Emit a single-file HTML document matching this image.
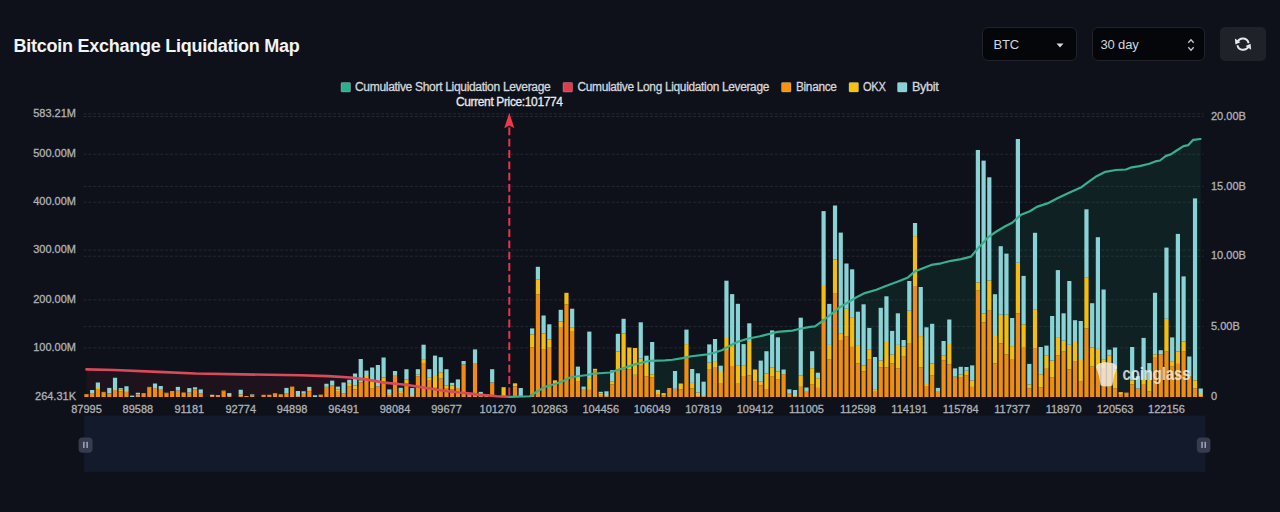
<!DOCTYPE html>
<html><head><meta charset="utf-8">
<style>
html,body{margin:0;padding:0;background:#0e1119;width:1280px;height:512px;overflow:hidden;font-family:"Liberation Sans",sans-serif;}
.title{position:absolute;left:13.5px;top:35.5px;font-size:18px;line-height:20px;font-weight:bold;color:#f2f3f5;white-space:nowrap;letter-spacing:-0.25px}
.sel{position:absolute;top:27px;height:34px;box-sizing:border-box;border:1.5px solid #20232b;border-radius:6px;background:#04060a;color:#d0d4dc;font-size:13px;letter-spacing:-0.15px}
.sel span{position:absolute;left:10.5px;top:8.5px}
.btn{position:absolute;left:1220px;top:27px;width:46px;height:34px;border-radius:5px;background:#1f2229}
svg{position:absolute;left:0;top:0}
</style></head><body>
<div class="title">Bitcoin Exchange Liquidation Map</div>
<div class="sel" style="left:982px;width:95px"><span>BTC</span>
<svg width="8" height="5" style="left:72.8px;top:14.6px"><path d="M0.5,0.5 L7.5,0.5 L4,4.5 Z" fill="#d8dae0"/></svg></div>
<div class="sel" style="left:1092px;width:113px"><span style="left:7.5px">30 day</span>
<svg width="10" height="16" style="left:92.5px;top:9px"><path d="M2.3,5.8 L5,2.8 L7.7,5.8 M2.3,10.2 L5,13.2 L7.7,10.2" fill="none" stroke="#c4c8d0" stroke-width="1.3"/></svg></div>
<div class="btn"><svg width="20" height="20" style="left:13px;top:7px" viewBox="0 0 20 20">
<path d="M15.6,9.2 A5.9,5.9 0 0 0 4.6,7.6" fill="none" stroke="#e6e8ec" stroke-width="1.9"/>
<path d="M1.9,4.6 L7.4,8.3 L2.4,10.6 Z" fill="#e6e8ec"/>
<path d="M4.4,11.2 A5.9,5.9 0 0 0 15.4,12.6" fill="none" stroke="#e6e8ec" stroke-width="1.9"/>
<path d="M18.1,15.8 L12.6,12.1 L17.6,9.8 Z" fill="#e6e8ec"/>
</svg></div>
<svg width="1280" height="512" viewBox="0 0 1280 512" style="font-family:'Liberation Sans',sans-serif">
<g font-size="12" fill="#d4d6db" stroke="#d4d6db" stroke-width="0.3" letter-spacing="-0.32">
<rect x="341" y="82.5" width="9.5" height="9.5" rx="1" fill="#2bb08e"/><text x="355" y="91.3" textLength="195.5" lengthAdjust="spacingAndGlyphs">Cumulative Short Liquidation Leverage</text>
<rect x="563" y="82.5" width="9.5" height="9.5" rx="1" fill="#e5394c"/><text x="577.5" y="91.3" textLength="191.5" lengthAdjust="spacingAndGlyphs">Cumulative Long Liquidation Leverage</text>
<rect x="781.5" y="82.5" width="9.5" height="9.5" rx="1" fill="#f7930f"/><text x="796" y="91.3" textLength="40.5" lengthAdjust="spacingAndGlyphs">Binance</text>
<rect x="849" y="82.5" width="9.5" height="9.5" rx="1" fill="#f7c20a"/><text x="863" y="91.3" textLength="22.5" lengthAdjust="spacingAndGlyphs">OKX</text>
<rect x="897.5" y="82.5" width="9.5" height="9.5" rx="1" fill="#86d3d7"/><text x="912" y="91.3" textLength="26.5" lengthAdjust="spacingAndGlyphs">Bybit</text>
</g>
<g stroke="#242832" stroke-width="1" stroke-dasharray="3,1.8">
<line x1="83.6" y1="113.9" x2="1203.6" y2="113.9"/>
<line x1="83.6" y1="154.2" x2="1203.6" y2="154.2"/>
<line x1="83.6" y1="202.2" x2="1203.6" y2="202.2"/>
<line x1="83.6" y1="250.1" x2="1203.6" y2="250.1"/>
<line x1="83.6" y1="299.9" x2="1203.6" y2="299.9"/>
<line x1="83.6" y1="347.9" x2="1203.6" y2="347.9"/>
<line x1="83.6" y1="116.5" x2="1203.6" y2="116.5"/>
<line x1="83.6" y1="186.4" x2="1203.6" y2="186.4"/>
<line x1="83.6" y1="256.2" x2="1203.6" y2="256.2"/>
<line x1="83.6" y1="326.6" x2="1203.6" y2="326.6"/>
</g>
<path d="M86.5,369.4 L114.25,370 L158,371.9 L195.5,373.5 L243,374.4 L300,375.2 L328,376.1 L350.6,377.5 L365.6,379.4 L384.4,382.6 L403,384.5 L412.4,385.75 L421.75,387.3 L431.1,388.75 L440.5,390.2 L449.9,391.4 L459.2,392.5 L468.6,393.4 L478,394.6 L487.3,395.3 L496.7,396.25 L509.3,396.7 L509.3,397.0 L86.5,397.0 Z" fill="#e5394c" fill-opacity="0.08"/>
<path d="M509.3,396.8 L530,396.25 L537.5,391.25 L545,386.9 L555,384 L562.5,381.25 L570,377.5 L577.5,376.25 L587.5,375 L592.5,373.75 L610,372.5 L617.5,370 L625,367.5 L635,364.4 L642.5,362.5 L650,360.8 L665,360.3 L672.5,359.75 L682.5,358.1 L691.25,356.25 L707.5,354.4 L715,352.5 L722.5,350 L730,345.6 L737.5,341.9 L747.5,338.75 L760,336.25 L770,333.75 L777.5,331.9 L792.5,330.6 L800,328.75 L810,326.9 L815,326.3 L823.3,320.5 L831.6,313.9 L839.9,307.2 L848.2,302.3 L856.5,297.3 L864.8,293.1 L876.4,289.8 L886.4,285.7 L898,281.5 L908,277.4 L914.6,271.6 L922.9,268.2 L931.2,264.9 L941.1,263.3 L951.1,260.8 L961,259.1 L971,256.6 L978.8,247.4 L987.6,237.7 L996.4,231.5 L1005.2,226.3 L1012.2,222.7 L1021,214.8 L1029.8,211.3 L1036.8,206.9 L1047.4,203.4 L1057.9,198.1 L1068.5,192.9 L1080.8,187.6 L1087.8,182.3 L1096.6,176.2 L1105.4,171.8 L1115.9,170 L1125.9,169.5 L1131.7,167.3 L1139.5,166.1 L1149.3,163.7 L1155.2,161.4 L1160,160.5 L1165.9,155.9 L1170.8,154.4 L1176.6,150.5 L1183.5,146.1 L1188.4,145.1 L1193.2,139.8 L1200.5,139 L1200.5,397.0 L509.3,397.0 Z" fill="#2bb08e" fill-opacity="0.1"/>
<g>
<rect x="84.36" y="394.5" width="4.2" height="2.5" fill="#f08c12"/>
<rect x="84.36" y="394" width="4.2" height="0.5" fill="#f5bd12"/>
<rect x="90.07" y="393.75" width="4.2" height="3.25" fill="#f08c12"/>
<rect x="90.07" y="390" width="4.2" height="3.75" fill="#89d2d5"/>
<rect x="95.79" y="389" width="4.2" height="8" fill="#f08c12"/>
<rect x="95.79" y="388" width="4.2" height="1" fill="#f5bd12"/>
<rect x="95.79" y="382.5" width="4.2" height="5.5" fill="#89d2d5"/>
<rect x="101.5" y="392.5" width="4.2" height="4.5" fill="#f08c12"/>
<rect x="101.5" y="391.9" width="4.2" height="0.6" fill="#f5bd12"/>
<rect x="107.21" y="393.5" width="4.2" height="3.5" fill="#f08c12"/>
<rect x="107.21" y="393.1" width="4.2" height="0.4" fill="#f5bd12"/>
<rect x="107.21" y="387.9" width="4.2" height="5.2" fill="#89d2d5"/>
<rect x="112.93" y="390" width="4.2" height="7" fill="#f08c12"/>
<rect x="112.93" y="377.75" width="4.2" height="12.25" fill="#89d2d5"/>
<rect x="118.64" y="391.25" width="4.2" height="5.75" fill="#f08c12"/>
<rect x="118.64" y="389.4" width="4.2" height="1.85" fill="#f5bd12"/>
<rect x="118.64" y="388.1" width="4.2" height="1.3" fill="#89d2d5"/>
<rect x="124.36" y="391.9" width="4.2" height="5.1" fill="#f08c12"/>
<rect x="124.36" y="386.25" width="4.2" height="5.65" fill="#89d2d5"/>
<rect x="130.07" y="395.6" width="4.2" height="1.4" fill="#89d2d5"/>
<rect x="135.79" y="394.4" width="4.2" height="2.6" fill="#f08c12"/>
<rect x="135.79" y="392.75" width="4.2" height="1.65" fill="#89d2d5"/>
<rect x="141.5" y="393.1" width="4.2" height="3.9" fill="#f08c12"/>
<rect x="147.21" y="387.5" width="4.2" height="9.5" fill="#f08c12"/>
<rect x="147.21" y="386.9" width="4.2" height="0.6" fill="#f5bd12"/>
<rect x="152.93" y="388.1" width="4.2" height="8.9" fill="#f08c12"/>
<rect x="152.93" y="383.5" width="4.2" height="4.6" fill="#89d2d5"/>
<rect x="158.64" y="389.75" width="4.2" height="7.25" fill="#f08c12"/>
<rect x="158.64" y="386" width="4.2" height="3.75" fill="#89d2d5"/>
<rect x="164.36" y="393.5" width="4.2" height="3.5" fill="#f08c12"/>
<rect x="164.36" y="392.75" width="4.2" height="0.75" fill="#f5bd12"/>
<rect x="170.07" y="391" width="4.2" height="6" fill="#f08c12"/>
<rect x="175.79" y="390.6" width="4.2" height="6.4" fill="#f08c12"/>
<rect x="175.79" y="386.9" width="4.2" height="3.7" fill="#89d2d5"/>
<rect x="181.5" y="392.5" width="4.2" height="4.5" fill="#f08c12"/>
<rect x="187.21" y="392.5" width="4.2" height="4.5" fill="#f08c12"/>
<rect x="187.21" y="388.1" width="4.2" height="4.4" fill="#89d2d5"/>
<rect x="192.93" y="389.4" width="4.2" height="7.6" fill="#f08c12"/>
<rect x="192.93" y="387.25" width="4.2" height="2.15" fill="#89d2d5"/>
<rect x="198.64" y="393.1" width="4.2" height="3.9" fill="#f08c12"/>
<rect x="198.64" y="389.4" width="4.2" height="3.7" fill="#89d2d5"/>
<rect x="210.07" y="396" width="4.2" height="1" fill="#f08c12"/>
<rect x="210.07" y="394.75" width="4.2" height="1.25" fill="#89d2d5"/>
<rect x="215.79" y="395" width="4.2" height="2" fill="#f08c12"/>
<rect x="221.5" y="391.5" width="4.2" height="5.5" fill="#f08c12"/>
<rect x="221.5" y="390.6" width="4.2" height="0.9" fill="#f5bd12"/>
<rect x="227.21" y="396" width="4.2" height="1" fill="#f08c12"/>
<rect x="227.21" y="393.1" width="4.2" height="2.9" fill="#89d2d5"/>
<rect x="238.64" y="396" width="4.2" height="1" fill="#f08c12"/>
<rect x="238.64" y="394.4" width="4.2" height="1.6" fill="#f5bd12"/>
<rect x="238.64" y="389.75" width="4.2" height="4.65" fill="#89d2d5"/>
<rect x="244.36" y="396" width="4.2" height="1" fill="#f08c12"/>
<rect x="250.07" y="396" width="4.2" height="1" fill="#f08c12"/>
<rect x="250.07" y="395.5" width="4.2" height="0.5" fill="#f5bd12"/>
<rect x="250.07" y="394.4" width="4.2" height="1.1" fill="#89d2d5"/>
<rect x="261.5" y="394.75" width="4.2" height="2.25" fill="#f08c12"/>
<rect x="267.21" y="394.75" width="4.2" height="2.25" fill="#f08c12"/>
<rect x="272.93" y="393.6" width="4.2" height="3.4" fill="#f08c12"/>
<rect x="272.93" y="393.1" width="4.2" height="0.5" fill="#f5bd12"/>
<rect x="278.64" y="395" width="4.2" height="2" fill="#f08c12"/>
<rect x="278.64" y="394.4" width="4.2" height="0.6" fill="#f5bd12"/>
<rect x="284.36" y="393.1" width="4.2" height="3.9" fill="#f08c12"/>
<rect x="284.36" y="387.9" width="4.2" height="5.2" fill="#89d2d5"/>
<rect x="290.07" y="386.6" width="4.2" height="10.4" fill="#f08c12"/>
<rect x="295.79" y="396" width="4.2" height="1" fill="#f08c12"/>
<rect x="295.79" y="391" width="4.2" height="5" fill="#89d2d5"/>
<rect x="301.5" y="393.75" width="4.2" height="3.25" fill="#f08c12"/>
<rect x="301.5" y="391.25" width="4.2" height="2.5" fill="#89d2d5"/>
<rect x="307.21" y="391.25" width="4.2" height="5.75" fill="#f08c12"/>
<rect x="307.21" y="390" width="4.2" height="1.25" fill="#f5bd12"/>
<rect x="307.21" y="386.9" width="4.2" height="3.1" fill="#89d2d5"/>
<rect x="312.93" y="395.25" width="4.2" height="1.75" fill="#89d2d5"/>
<rect x="318.64" y="394.6" width="4.2" height="2.4" fill="#f08c12"/>
<rect x="324.36" y="386.9" width="4.2" height="10.1" fill="#f08c12"/>
<rect x="324.36" y="383.75" width="4.2" height="3.15" fill="#89d2d5"/>
<rect x="330.07" y="385.6" width="4.2" height="11.4" fill="#f08c12"/>
<rect x="330.07" y="380.6" width="4.2" height="5" fill="#89d2d5"/>
<rect x="335.79" y="391" width="4.2" height="6" fill="#f08c12"/>
<rect x="335.79" y="389.4" width="4.2" height="1.6" fill="#f5bd12"/>
<rect x="335.79" y="386.6" width="4.2" height="2.8" fill="#89d2d5"/>
<rect x="341.5" y="393.1" width="4.2" height="3.9" fill="#f08c12"/>
<rect x="341.5" y="382.5" width="4.2" height="10.6" fill="#89d2d5"/>
<rect x="347.21" y="386.25" width="4.2" height="10.75" fill="#f08c12"/>
<rect x="347.21" y="383.1" width="4.2" height="3.15" fill="#f5bd12"/>
<rect x="347.21" y="379.75" width="4.2" height="3.35" fill="#89d2d5"/>
<rect x="352.93" y="389.4" width="4.2" height="7.6" fill="#f08c12"/>
<rect x="352.93" y="385.6" width="4.2" height="3.8" fill="#f5bd12"/>
<rect x="352.93" y="373.5" width="4.2" height="12.1" fill="#89d2d5"/>
<rect x="358.64" y="382.5" width="4.2" height="14.5" fill="#f08c12"/>
<rect x="358.64" y="380.6" width="4.2" height="1.9" fill="#f5bd12"/>
<rect x="358.64" y="359" width="4.2" height="21.6" fill="#89d2d5"/>
<rect x="364.36" y="378.1" width="4.2" height="18.9" fill="#f08c12"/>
<rect x="364.36" y="375" width="4.2" height="3.1" fill="#f5bd12"/>
<rect x="364.36" y="370.6" width="4.2" height="4.4" fill="#89d2d5"/>
<rect x="370.07" y="388.1" width="4.2" height="8.9" fill="#f08c12"/>
<rect x="370.07" y="381.9" width="4.2" height="6.2" fill="#f5bd12"/>
<rect x="370.07" y="367.5" width="4.2" height="14.4" fill="#89d2d5"/>
<rect x="375.79" y="386.25" width="4.2" height="10.75" fill="#f08c12"/>
<rect x="375.79" y="365" width="4.2" height="21.25" fill="#89d2d5"/>
<rect x="381.5" y="381.9" width="4.2" height="15.1" fill="#f08c12"/>
<rect x="381.5" y="377.5" width="4.2" height="4.4" fill="#f5bd12"/>
<rect x="381.5" y="357.5" width="4.2" height="20" fill="#89d2d5"/>
<rect x="387.21" y="395" width="4.2" height="2" fill="#f08c12"/>
<rect x="387.21" y="393.1" width="4.2" height="1.9" fill="#f5bd12"/>
<rect x="387.21" y="389.4" width="4.2" height="3.7" fill="#89d2d5"/>
<rect x="392.93" y="375" width="4.2" height="22" fill="#f08c12"/>
<rect x="392.93" y="371" width="4.2" height="4" fill="#89d2d5"/>
<rect x="398.64" y="393.75" width="4.2" height="3.25" fill="#f08c12"/>
<rect x="398.64" y="391.9" width="4.2" height="1.85" fill="#f5bd12"/>
<rect x="398.64" y="387.75" width="4.2" height="4.15" fill="#89d2d5"/>
<rect x="404.36" y="383.3" width="4.2" height="13.7" fill="#f08c12"/>
<rect x="404.36" y="379.4" width="4.2" height="3.9" fill="#f5bd12"/>
<rect x="404.36" y="369.2" width="4.2" height="10.2" fill="#89d2d5"/>
<rect x="410.07" y="396" width="4.2" height="1" fill="#f08c12"/>
<rect x="410.07" y="388" width="4.2" height="8" fill="#89d2d5"/>
<rect x="415.79" y="376.2" width="4.2" height="20.8" fill="#f08c12"/>
<rect x="415.79" y="374.7" width="4.2" height="1.5" fill="#f5bd12"/>
<rect x="415.79" y="369.2" width="4.2" height="5.5" fill="#89d2d5"/>
<rect x="421.5" y="363" width="4.2" height="34" fill="#f08c12"/>
<rect x="421.5" y="359.8" width="4.2" height="3.2" fill="#f5bd12"/>
<rect x="421.5" y="344.7" width="4.2" height="15.1" fill="#89d2d5"/>
<rect x="427.21" y="380" width="4.2" height="17" fill="#f08c12"/>
<rect x="427.21" y="377.8" width="4.2" height="2.2" fill="#f5bd12"/>
<rect x="427.21" y="369.2" width="4.2" height="8.6" fill="#89d2d5"/>
<rect x="432.93" y="387" width="4.2" height="10" fill="#f08c12"/>
<rect x="432.93" y="375" width="4.2" height="12" fill="#f5bd12"/>
<rect x="432.93" y="355.6" width="4.2" height="19.4" fill="#89d2d5"/>
<rect x="438.64" y="378.6" width="4.2" height="18.4" fill="#f08c12"/>
<rect x="438.64" y="372.3" width="4.2" height="6.3" fill="#f5bd12"/>
<rect x="438.64" y="357.2" width="4.2" height="15.1" fill="#89d2d5"/>
<rect x="444.36" y="388.75" width="4.2" height="8.25" fill="#f08c12"/>
<rect x="444.36" y="385.6" width="4.2" height="3.15" fill="#f5bd12"/>
<rect x="444.36" y="369.2" width="4.2" height="16.4" fill="#89d2d5"/>
<rect x="450.07" y="389.5" width="4.2" height="7.5" fill="#f08c12"/>
<rect x="450.07" y="385.6" width="4.2" height="3.9" fill="#f5bd12"/>
<rect x="450.07" y="382.8" width="4.2" height="2.8" fill="#89d2d5"/>
<rect x="455.79" y="388" width="4.2" height="9" fill="#f08c12"/>
<rect x="455.79" y="379.4" width="4.2" height="8.6" fill="#89d2d5"/>
<rect x="461.5" y="364.5" width="4.2" height="32.5" fill="#f08c12"/>
<rect x="461.5" y="361" width="4.2" height="3.5" fill="#89d2d5"/>
<rect x="467.21" y="395" width="4.2" height="2" fill="#f08c12"/>
<rect x="467.21" y="394.2" width="4.2" height="0.8" fill="#f5bd12"/>
<rect x="472.93" y="363" width="4.2" height="34" fill="#f08c12"/>
<rect x="472.93" y="349.4" width="4.2" height="13.6" fill="#89d2d5"/>
<rect x="478.64" y="396" width="4.2" height="1" fill="#f08c12"/>
<rect x="478.64" y="391.9" width="4.2" height="4.1" fill="#89d2d5"/>
<rect x="484.36" y="396" width="4.2" height="1" fill="#f08c12"/>
<rect x="484.36" y="395" width="4.2" height="1" fill="#f5bd12"/>
<rect x="484.36" y="394" width="4.2" height="1" fill="#89d2d5"/>
<rect x="490.07" y="382.5" width="4.2" height="14.5" fill="#f08c12"/>
<rect x="490.07" y="369.2" width="4.2" height="13.3" fill="#89d2d5"/>
<rect x="501.5" y="396" width="4.2" height="1" fill="#f08c12"/>
<rect x="501.5" y="387.2" width="4.2" height="8.8" fill="#f5bd12"/>
<rect x="512.93" y="386.4" width="4.2" height="10.6" fill="#f08c12"/>
<rect x="512.93" y="383.3" width="4.2" height="3.1" fill="#f5bd12"/>
<rect x="518.64" y="396" width="4.2" height="1" fill="#f08c12"/>
<rect x="518.64" y="388" width="4.2" height="8" fill="#89d2d5"/>
<rect x="530.07" y="347.5" width="4.2" height="49.5" fill="#f08c12"/>
<rect x="530.07" y="334.4" width="4.2" height="13.1" fill="#f5bd12"/>
<rect x="530.07" y="328.4" width="4.2" height="6" fill="#89d2d5"/>
<rect x="535.79" y="294.2" width="4.2" height="102.8" fill="#f08c12"/>
<rect x="535.79" y="279.7" width="4.2" height="14.5" fill="#f5bd12"/>
<rect x="535.79" y="266.8" width="4.2" height="12.9" fill="#89d2d5"/>
<rect x="541.5" y="349.7" width="4.2" height="47.3" fill="#f08c12"/>
<rect x="541.5" y="333.3" width="4.2" height="16.4" fill="#f5bd12"/>
<rect x="541.5" y="315.5" width="4.2" height="17.8" fill="#89d2d5"/>
<rect x="547.21" y="347" width="4.2" height="50" fill="#f08c12"/>
<rect x="547.21" y="339.3" width="4.2" height="7.7" fill="#f5bd12"/>
<rect x="547.21" y="324.3" width="4.2" height="15" fill="#89d2d5"/>
<rect x="552.93" y="383.6" width="4.2" height="13.4" fill="#f08c12"/>
<rect x="552.93" y="380.3" width="4.2" height="3.3" fill="#f5bd12"/>
<rect x="558.64" y="327.8" width="4.2" height="69.2" fill="#f08c12"/>
<rect x="558.64" y="321.5" width="4.2" height="6.3" fill="#f5bd12"/>
<rect x="558.64" y="309.8" width="4.2" height="11.7" fill="#89d2d5"/>
<rect x="564.36" y="304.3" width="4.2" height="92.7" fill="#f08c12"/>
<rect x="564.36" y="292.8" width="4.2" height="11.5" fill="#f5bd12"/>
<rect x="570.07" y="331" width="4.2" height="66" fill="#f08c12"/>
<rect x="570.07" y="327.8" width="4.2" height="3.2" fill="#f5bd12"/>
<rect x="570.07" y="308.7" width="4.2" height="19.1" fill="#89d2d5"/>
<rect x="575.79" y="381.7" width="4.2" height="15.3" fill="#f08c12"/>
<rect x="575.79" y="377" width="4.2" height="4.7" fill="#f5bd12"/>
<rect x="575.79" y="366.6" width="4.2" height="10.4" fill="#89d2d5"/>
<rect x="581.5" y="389" width="4.2" height="8" fill="#f08c12"/>
<rect x="581.5" y="386.6" width="4.2" height="2.4" fill="#89d2d5"/>
<rect x="587.21" y="389.9" width="4.2" height="7.1" fill="#f08c12"/>
<rect x="587.21" y="378.1" width="4.2" height="11.8" fill="#f5bd12"/>
<rect x="587.21" y="331.6" width="4.2" height="46.5" fill="#89d2d5"/>
<rect x="592.93" y="370.7" width="4.2" height="26.3" fill="#f08c12"/>
<rect x="592.93" y="368.8" width="4.2" height="1.9" fill="#f5bd12"/>
<rect x="598.64" y="395" width="4.2" height="2" fill="#f08c12"/>
<rect x="598.64" y="393.5" width="4.2" height="1.5" fill="#f5bd12"/>
<rect x="598.64" y="391.8" width="4.2" height="1.7" fill="#89d2d5"/>
<rect x="604.36" y="396" width="4.2" height="1" fill="#f08c12"/>
<rect x="604.36" y="391.3" width="4.2" height="4.7" fill="#89d2d5"/>
<rect x="610.07" y="384.4" width="4.2" height="12.6" fill="#f08c12"/>
<rect x="610.07" y="381.7" width="4.2" height="2.7" fill="#f5bd12"/>
<rect x="610.07" y="370.2" width="4.2" height="11.5" fill="#89d2d5"/>
<rect x="615.79" y="370.7" width="4.2" height="26.3" fill="#f08c12"/>
<rect x="615.79" y="351.6" width="4.2" height="19.1" fill="#f5bd12"/>
<rect x="615.79" y="333.8" width="4.2" height="17.8" fill="#89d2d5"/>
<rect x="621.5" y="369.4" width="4.2" height="27.6" fill="#f08c12"/>
<rect x="621.5" y="333.3" width="4.2" height="36.1" fill="#f5bd12"/>
<rect x="621.5" y="318.8" width="4.2" height="14.5" fill="#89d2d5"/>
<rect x="627.21" y="369.5" width="4.2" height="27.5" fill="#f08c12"/>
<rect x="627.21" y="347.5" width="4.2" height="22" fill="#f5bd12"/>
<rect x="632.93" y="374.8" width="4.2" height="22.2" fill="#f08c12"/>
<rect x="632.93" y="348" width="4.2" height="26.8" fill="#f5bd12"/>
<rect x="638.64" y="365" width="4.2" height="32" fill="#f08c12"/>
<rect x="638.64" y="358.6" width="4.2" height="6.4" fill="#f5bd12"/>
<rect x="638.64" y="322.3" width="4.2" height="36.3" fill="#89d2d5"/>
<rect x="644.36" y="376.2" width="4.2" height="20.8" fill="#f08c12"/>
<rect x="644.36" y="363" width="4.2" height="13.2" fill="#f5bd12"/>
<rect x="644.36" y="355.7" width="4.2" height="7.3" fill="#89d2d5"/>
<rect x="650.07" y="377.6" width="4.2" height="19.4" fill="#f08c12"/>
<rect x="650.07" y="374.3" width="4.2" height="3.3" fill="#f5bd12"/>
<rect x="650.07" y="342" width="4.2" height="32.3" fill="#89d2d5"/>
<rect x="655.79" y="394" width="4.2" height="3" fill="#f08c12"/>
<rect x="655.79" y="392" width="4.2" height="2" fill="#f5bd12"/>
<rect x="655.79" y="389.9" width="4.2" height="2.1" fill="#89d2d5"/>
<rect x="661.5" y="395.5" width="4.2" height="1.5" fill="#f08c12"/>
<rect x="661.5" y="393.1" width="4.2" height="2.4" fill="#f5bd12"/>
<rect x="667.21" y="388" width="4.2" height="9" fill="#f08c12"/>
<rect x="672.93" y="388.8" width="4.2" height="8.2" fill="#f08c12"/>
<rect x="672.93" y="371" width="4.2" height="17.8" fill="#89d2d5"/>
<rect x="678.64" y="389.3" width="4.2" height="7.7" fill="#f08c12"/>
<rect x="678.64" y="383.5" width="4.2" height="5.8" fill="#f5bd12"/>
<rect x="684.36" y="357.6" width="4.2" height="39.4" fill="#f08c12"/>
<rect x="684.36" y="344.1" width="4.2" height="13.5" fill="#f5bd12"/>
<rect x="684.36" y="329.6" width="4.2" height="14.5" fill="#89d2d5"/>
<rect x="690.07" y="388.5" width="4.2" height="8.5" fill="#f08c12"/>
<rect x="690.07" y="382.9" width="4.2" height="5.6" fill="#f5bd12"/>
<rect x="690.07" y="369" width="4.2" height="13.9" fill="#89d2d5"/>
<rect x="695.79" y="396" width="4.2" height="1" fill="#f08c12"/>
<rect x="695.79" y="392.6" width="4.2" height="3.4" fill="#f5bd12"/>
<rect x="695.79" y="373.3" width="4.2" height="19.3" fill="#89d2d5"/>
<rect x="701.5" y="396" width="4.2" height="1" fill="#f08c12"/>
<rect x="701.5" y="381.7" width="4.2" height="14.3" fill="#89d2d5"/>
<rect x="707.21" y="369" width="4.2" height="28" fill="#f08c12"/>
<rect x="707.21" y="362.6" width="4.2" height="6.4" fill="#f5bd12"/>
<rect x="707.21" y="344.4" width="4.2" height="18.2" fill="#89d2d5"/>
<rect x="712.93" y="367" width="4.2" height="30" fill="#f08c12"/>
<rect x="712.93" y="361.9" width="4.2" height="5.1" fill="#f5bd12"/>
<rect x="712.93" y="339" width="4.2" height="22.9" fill="#89d2d5"/>
<rect x="718.64" y="383" width="4.2" height="14" fill="#f08c12"/>
<rect x="718.64" y="372" width="4.2" height="11" fill="#f5bd12"/>
<rect x="718.64" y="365.7" width="4.2" height="6.3" fill="#89d2d5"/>
<rect x="724.36" y="350" width="4.2" height="47" fill="#f08c12"/>
<rect x="724.36" y="338" width="4.2" height="12" fill="#f5bd12"/>
<rect x="724.36" y="280.7" width="4.2" height="57.3" fill="#89d2d5"/>
<rect x="730.07" y="366" width="4.2" height="31" fill="#f08c12"/>
<rect x="730.07" y="346.1" width="4.2" height="19.9" fill="#f5bd12"/>
<rect x="730.07" y="294.1" width="4.2" height="52" fill="#89d2d5"/>
<rect x="735.79" y="383" width="4.2" height="14" fill="#f08c12"/>
<rect x="735.79" y="365.2" width="4.2" height="17.8" fill="#f5bd12"/>
<rect x="735.79" y="303.8" width="4.2" height="61.4" fill="#89d2d5"/>
<rect x="741.5" y="376" width="4.2" height="21" fill="#f08c12"/>
<rect x="741.5" y="365.2" width="4.2" height="10.8" fill="#f5bd12"/>
<rect x="741.5" y="344.1" width="4.2" height="21.1" fill="#89d2d5"/>
<rect x="747.21" y="375.3" width="4.2" height="21.7" fill="#f08c12"/>
<rect x="747.21" y="341.1" width="4.2" height="34.2" fill="#f5bd12"/>
<rect x="747.21" y="323.3" width="4.2" height="17.8" fill="#89d2d5"/>
<rect x="752.93" y="381.7" width="4.2" height="15.3" fill="#f08c12"/>
<rect x="752.93" y="369.5" width="4.2" height="12.2" fill="#f5bd12"/>
<rect x="758.64" y="385.5" width="4.2" height="11.5" fill="#f08c12"/>
<rect x="758.64" y="381.7" width="4.2" height="3.8" fill="#f5bd12"/>
<rect x="758.64" y="360.6" width="4.2" height="21.1" fill="#89d2d5"/>
<rect x="764.36" y="389" width="4.2" height="8" fill="#f08c12"/>
<rect x="764.36" y="373.6" width="4.2" height="15.4" fill="#f5bd12"/>
<rect x="764.36" y="351.2" width="4.2" height="22.4" fill="#89d2d5"/>
<rect x="770.07" y="376.1" width="4.2" height="20.9" fill="#f08c12"/>
<rect x="770.07" y="367.7" width="4.2" height="8.4" fill="#f5bd12"/>
<rect x="770.07" y="330.4" width="4.2" height="37.3" fill="#89d2d5"/>
<rect x="775.79" y="379.1" width="4.2" height="17.9" fill="#f08c12"/>
<rect x="775.79" y="371.5" width="4.2" height="7.6" fill="#f5bd12"/>
<rect x="775.79" y="337.3" width="4.2" height="34.2" fill="#89d2d5"/>
<rect x="781.5" y="374.1" width="4.2" height="22.9" fill="#f08c12"/>
<rect x="781.5" y="369.5" width="4.2" height="4.6" fill="#89d2d5"/>
<rect x="787.21" y="393.1" width="4.2" height="3.9" fill="#f08c12"/>
<rect x="787.21" y="389.3" width="4.2" height="3.8" fill="#89d2d5"/>
<rect x="792.93" y="396" width="4.2" height="1" fill="#f08c12"/>
<rect x="792.93" y="390" width="4.2" height="6" fill="#89d2d5"/>
<rect x="798.64" y="386.8" width="4.2" height="10.2" fill="#f08c12"/>
<rect x="798.64" y="375.3" width="4.2" height="11.5" fill="#f5bd12"/>
<rect x="798.64" y="317.7" width="4.2" height="57.6" fill="#89d2d5"/>
<rect x="804.36" y="391.8" width="4.2" height="5.2" fill="#f08c12"/>
<rect x="804.36" y="387.5" width="4.2" height="4.3" fill="#89d2d5"/>
<rect x="810.07" y="384.2" width="4.2" height="12.8" fill="#f08c12"/>
<rect x="810.07" y="368.2" width="4.2" height="16" fill="#f5bd12"/>
<rect x="810.07" y="351.2" width="4.2" height="17" fill="#89d2d5"/>
<rect x="815.79" y="387.9" width="4.2" height="9.1" fill="#f08c12"/>
<rect x="815.79" y="378.2" width="4.2" height="9.7" fill="#f5bd12"/>
<rect x="815.79" y="372.7" width="4.2" height="5.5" fill="#89d2d5"/>
<rect x="821.5" y="319.5" width="4.2" height="77.5" fill="#f08c12"/>
<rect x="821.5" y="285" width="4.2" height="34.5" fill="#f5bd12"/>
<rect x="821.5" y="211.1" width="4.2" height="73.9" fill="#89d2d5"/>
<rect x="827.21" y="359.6" width="4.2" height="37.4" fill="#f08c12"/>
<rect x="827.21" y="344.9" width="4.2" height="14.7" fill="#f5bd12"/>
<rect x="827.21" y="303.9" width="4.2" height="41" fill="#89d2d5"/>
<rect x="832.93" y="293.75" width="4.2" height="103.25" fill="#f08c12"/>
<rect x="832.93" y="259.6" width="4.2" height="34.15" fill="#f5bd12"/>
<rect x="832.93" y="205.5" width="4.2" height="54.1" fill="#89d2d5"/>
<rect x="838.64" y="340" width="4.2" height="57" fill="#f08c12"/>
<rect x="838.64" y="333.2" width="4.2" height="6.8" fill="#f5bd12"/>
<rect x="838.64" y="232.6" width="4.2" height="100.6" fill="#89d2d5"/>
<rect x="844.36" y="336.1" width="4.2" height="60.9" fill="#f08c12"/>
<rect x="844.36" y="308.8" width="4.2" height="27.3" fill="#f5bd12"/>
<rect x="844.36" y="263.5" width="4.2" height="45.3" fill="#89d2d5"/>
<rect x="850.07" y="346.9" width="4.2" height="50.1" fill="#f08c12"/>
<rect x="850.07" y="317.2" width="4.2" height="29.7" fill="#f5bd12"/>
<rect x="850.07" y="269.3" width="4.2" height="47.9" fill="#89d2d5"/>
<rect x="855.79" y="363.5" width="4.2" height="33.5" fill="#f08c12"/>
<rect x="855.79" y="345.9" width="4.2" height="17.6" fill="#f5bd12"/>
<rect x="855.79" y="311.7" width="4.2" height="34.2" fill="#89d2d5"/>
<rect x="861.5" y="371.3" width="4.2" height="25.7" fill="#f08c12"/>
<rect x="861.5" y="365.4" width="4.2" height="5.9" fill="#f5bd12"/>
<rect x="861.5" y="304.3" width="4.2" height="61.1" fill="#89d2d5"/>
<rect x="867.21" y="359.6" width="4.2" height="37.4" fill="#f08c12"/>
<rect x="867.21" y="349.8" width="4.2" height="9.8" fill="#f5bd12"/>
<rect x="867.21" y="327.9" width="4.2" height="21.9" fill="#89d2d5"/>
<rect x="872.93" y="391.8" width="4.2" height="5.2" fill="#f08c12"/>
<rect x="872.93" y="389.8" width="4.2" height="2" fill="#f5bd12"/>
<rect x="872.93" y="357" width="4.2" height="32.8" fill="#89d2d5"/>
<rect x="878.64" y="367.4" width="4.2" height="29.6" fill="#f08c12"/>
<rect x="878.64" y="360.5" width="4.2" height="6.9" fill="#f5bd12"/>
<rect x="878.64" y="307.8" width="4.2" height="52.7" fill="#89d2d5"/>
<rect x="884.36" y="367.4" width="4.2" height="29.6" fill="#f08c12"/>
<rect x="884.36" y="342" width="4.2" height="25.4" fill="#f5bd12"/>
<rect x="884.36" y="296.3" width="4.2" height="45.7" fill="#89d2d5"/>
<rect x="890.07" y="363.5" width="4.2" height="33.5" fill="#f08c12"/>
<rect x="890.07" y="354.7" width="4.2" height="8.8" fill="#f5bd12"/>
<rect x="890.07" y="330.9" width="4.2" height="23.8" fill="#89d2d5"/>
<rect x="895.79" y="368.4" width="4.2" height="28.6" fill="#f08c12"/>
<rect x="895.79" y="344.9" width="4.2" height="23.5" fill="#f5bd12"/>
<rect x="895.79" y="313.3" width="4.2" height="31.6" fill="#89d2d5"/>
<rect x="901.5" y="356.6" width="4.2" height="40.4" fill="#f08c12"/>
<rect x="901.5" y="346.5" width="4.2" height="10.1" fill="#f5bd12"/>
<rect x="901.5" y="340" width="4.2" height="6.5" fill="#89d2d5"/>
<rect x="907.21" y="343" width="4.2" height="54" fill="#f08c12"/>
<rect x="907.21" y="310.7" width="4.2" height="32.3" fill="#f5bd12"/>
<rect x="907.21" y="281" width="4.2" height="29.7" fill="#89d2d5"/>
<rect x="912.93" y="286" width="4.2" height="111" fill="#f08c12"/>
<rect x="912.93" y="236.1" width="4.2" height="49.9" fill="#f5bd12"/>
<rect x="912.93" y="223" width="4.2" height="13.1" fill="#89d2d5"/>
<rect x="918.64" y="367.4" width="4.2" height="29.6" fill="#f08c12"/>
<rect x="918.64" y="336.1" width="4.2" height="31.3" fill="#f5bd12"/>
<rect x="918.64" y="287" width="4.2" height="49.1" fill="#89d2d5"/>
<rect x="924.36" y="386" width="4.2" height="11" fill="#f08c12"/>
<rect x="924.36" y="383" width="4.2" height="3" fill="#f5bd12"/>
<rect x="924.36" y="327.3" width="4.2" height="55.7" fill="#89d2d5"/>
<rect x="930.07" y="375.2" width="4.2" height="21.8" fill="#f08c12"/>
<rect x="930.07" y="363.5" width="4.2" height="11.7" fill="#f5bd12"/>
<rect x="930.07" y="323.8" width="4.2" height="39.7" fill="#89d2d5"/>
<rect x="935.79" y="391.8" width="4.2" height="5.2" fill="#f08c12"/>
<rect x="935.79" y="387.9" width="4.2" height="3.9" fill="#89d2d5"/>
<rect x="941.5" y="360.2" width="4.2" height="36.8" fill="#f08c12"/>
<rect x="941.5" y="355.7" width="4.2" height="4.5" fill="#f5bd12"/>
<rect x="941.5" y="341" width="4.2" height="14.7" fill="#89d2d5"/>
<rect x="947.21" y="364.5" width="4.2" height="32.5" fill="#f08c12"/>
<rect x="947.21" y="344" width="4.2" height="20.5" fill="#f5bd12"/>
<rect x="947.21" y="319.5" width="4.2" height="24.5" fill="#89d2d5"/>
<rect x="952.93" y="377.7" width="4.2" height="19.3" fill="#f08c12"/>
<rect x="952.93" y="376.6" width="4.2" height="1.1" fill="#f5bd12"/>
<rect x="952.93" y="368.4" width="4.2" height="8.2" fill="#89d2d5"/>
<rect x="958.64" y="377.7" width="4.2" height="19.3" fill="#f08c12"/>
<rect x="958.64" y="374.6" width="4.2" height="3.1" fill="#f5bd12"/>
<rect x="958.64" y="366.8" width="4.2" height="7.8" fill="#89d2d5"/>
<rect x="964.36" y="375.2" width="4.2" height="21.8" fill="#f08c12"/>
<rect x="964.36" y="370.7" width="4.2" height="4.5" fill="#f5bd12"/>
<rect x="964.36" y="367" width="4.2" height="3.7" fill="#89d2d5"/>
<rect x="970.07" y="386.9" width="4.2" height="10.1" fill="#f08c12"/>
<rect x="970.07" y="380.5" width="4.2" height="6.4" fill="#f5bd12"/>
<rect x="970.07" y="365.4" width="4.2" height="15.1" fill="#89d2d5"/>
<rect x="975.79" y="290.6" width="4.2" height="106.4" fill="#f08c12"/>
<rect x="975.79" y="282.4" width="4.2" height="8.2" fill="#f5bd12"/>
<rect x="975.79" y="150" width="4.2" height="132.4" fill="#89d2d5"/>
<rect x="981.5" y="322.3" width="4.2" height="74.7" fill="#f08c12"/>
<rect x="981.5" y="313.3" width="4.2" height="9" fill="#f5bd12"/>
<rect x="981.5" y="160.6" width="4.2" height="152.7" fill="#89d2d5"/>
<rect x="987.21" y="310.6" width="4.2" height="86.4" fill="#f08c12"/>
<rect x="987.21" y="280.5" width="4.2" height="30.1" fill="#f5bd12"/>
<rect x="987.21" y="177.3" width="4.2" height="103.2" fill="#89d2d5"/>
<rect x="992.93" y="363.4" width="4.2" height="33.6" fill="#f08c12"/>
<rect x="992.93" y="336" width="4.2" height="27.4" fill="#f5bd12"/>
<rect x="992.93" y="294.2" width="4.2" height="41.8" fill="#89d2d5"/>
<rect x="998.64" y="343.4" width="4.2" height="53.6" fill="#f08c12"/>
<rect x="998.64" y="314.7" width="4.2" height="28.7" fill="#f5bd12"/>
<rect x="998.64" y="246.2" width="4.2" height="68.5" fill="#89d2d5"/>
<rect x="1004.36" y="354.3" width="4.2" height="42.7" fill="#f08c12"/>
<rect x="1004.36" y="314.7" width="4.2" height="39.6" fill="#f5bd12"/>
<rect x="1004.36" y="253.6" width="4.2" height="61.1" fill="#89d2d5"/>
<rect x="1010.07" y="359" width="4.2" height="38" fill="#f08c12"/>
<rect x="1010.07" y="346.1" width="4.2" height="12.9" fill="#f5bd12"/>
<rect x="1010.07" y="318" width="4.2" height="28.1" fill="#89d2d5"/>
<rect x="1015.79" y="313.3" width="4.2" height="83.7" fill="#f08c12"/>
<rect x="1015.79" y="262.8" width="4.2" height="50.5" fill="#f5bd12"/>
<rect x="1015.79" y="139" width="4.2" height="123.8" fill="#89d2d5"/>
<rect x="1021.5" y="347" width="4.2" height="50" fill="#f08c12"/>
<rect x="1021.5" y="324.3" width="4.2" height="22.7" fill="#f5bd12"/>
<rect x="1021.5" y="275.9" width="4.2" height="48.4" fill="#89d2d5"/>
<rect x="1027.21" y="388.5" width="4.2" height="8.5" fill="#f08c12"/>
<rect x="1027.21" y="384.4" width="4.2" height="4.1" fill="#f5bd12"/>
<rect x="1027.21" y="363.9" width="4.2" height="20.5" fill="#89d2d5"/>
<rect x="1032.93" y="348" width="4.2" height="49" fill="#f08c12"/>
<rect x="1032.93" y="309.8" width="4.2" height="38.2" fill="#f5bd12"/>
<rect x="1032.93" y="232.8" width="4.2" height="77" fill="#89d2d5"/>
<rect x="1038.64" y="387.2" width="4.2" height="9.8" fill="#f08c12"/>
<rect x="1038.64" y="374.3" width="4.2" height="12.9" fill="#f5bd12"/>
<rect x="1038.64" y="347" width="4.2" height="27.3" fill="#89d2d5"/>
<rect x="1044.36" y="368.8" width="4.2" height="28.2" fill="#f08c12"/>
<rect x="1044.36" y="355.2" width="4.2" height="13.6" fill="#f5bd12"/>
<rect x="1044.36" y="345.6" width="4.2" height="9.6" fill="#89d2d5"/>
<rect x="1050.07" y="377.6" width="4.2" height="19.4" fill="#f08c12"/>
<rect x="1050.07" y="360.6" width="4.2" height="17" fill="#f5bd12"/>
<rect x="1050.07" y="316" width="4.2" height="44.6" fill="#89d2d5"/>
<rect x="1055.79" y="355.2" width="4.2" height="41.8" fill="#f08c12"/>
<rect x="1055.79" y="337.9" width="4.2" height="17.3" fill="#f5bd12"/>
<rect x="1055.79" y="270.1" width="4.2" height="67.8" fill="#89d2d5"/>
<rect x="1061.5" y="351.6" width="4.2" height="45.4" fill="#f08c12"/>
<rect x="1061.5" y="340.7" width="4.2" height="10.9" fill="#f5bd12"/>
<rect x="1061.5" y="313.3" width="4.2" height="27.4" fill="#89d2d5"/>
<rect x="1067.21" y="369.4" width="4.2" height="27.6" fill="#f08c12"/>
<rect x="1067.21" y="344.8" width="4.2" height="24.6" fill="#f5bd12"/>
<rect x="1067.21" y="281" width="4.2" height="63.8" fill="#89d2d5"/>
<rect x="1072.93" y="361.7" width="4.2" height="35.3" fill="#f08c12"/>
<rect x="1072.93" y="342" width="4.2" height="19.7" fill="#f5bd12"/>
<rect x="1072.93" y="320.2" width="4.2" height="21.8" fill="#89d2d5"/>
<rect x="1078.64" y="381.7" width="4.2" height="15.3" fill="#f08c12"/>
<rect x="1078.64" y="359" width="4.2" height="22.7" fill="#f5bd12"/>
<rect x="1078.64" y="321" width="4.2" height="38" fill="#89d2d5"/>
<rect x="1084.36" y="328.4" width="4.2" height="68.6" fill="#f08c12"/>
<rect x="1084.36" y="277.8" width="4.2" height="50.6" fill="#f5bd12"/>
<rect x="1084.36" y="209.3" width="4.2" height="68.5" fill="#89d2d5"/>
<rect x="1090.07" y="366.6" width="4.2" height="30.4" fill="#f08c12"/>
<rect x="1090.07" y="347.5" width="4.2" height="19.1" fill="#f5bd12"/>
<rect x="1090.07" y="303.2" width="4.2" height="44.3" fill="#89d2d5"/>
<rect x="1095.79" y="366.6" width="4.2" height="30.4" fill="#f08c12"/>
<rect x="1095.79" y="348.9" width="4.2" height="17.7" fill="#f5bd12"/>
<rect x="1095.79" y="237.2" width="4.2" height="111.7" fill="#89d2d5"/>
<rect x="1101.5" y="368" width="4.2" height="29" fill="#f08c12"/>
<rect x="1101.5" y="359.8" width="4.2" height="8.2" fill="#f5bd12"/>
<rect x="1101.5" y="289.5" width="4.2" height="70.3" fill="#89d2d5"/>
<rect x="1107.21" y="362.5" width="4.2" height="34.5" fill="#f08c12"/>
<rect x="1107.21" y="355.7" width="4.2" height="6.8" fill="#f5bd12"/>
<rect x="1107.21" y="349.7" width="4.2" height="6" fill="#89d2d5"/>
<rect x="1112.93" y="388.5" width="4.2" height="8.5" fill="#f08c12"/>
<rect x="1112.93" y="369.4" width="4.2" height="19.1" fill="#f5bd12"/>
<rect x="1112.93" y="347.5" width="4.2" height="21.9" fill="#89d2d5"/>
<rect x="1118.64" y="394" width="4.2" height="3" fill="#f08c12"/>
<rect x="1118.64" y="392.1" width="4.2" height="1.9" fill="#f5bd12"/>
<rect x="1124.36" y="392.6" width="4.2" height="4.4" fill="#f08c12"/>
<rect x="1130.07" y="384.4" width="4.2" height="12.6" fill="#f08c12"/>
<rect x="1130.07" y="380.3" width="4.2" height="4.1" fill="#f5bd12"/>
<rect x="1130.07" y="347" width="4.2" height="33.3" fill="#89d2d5"/>
<rect x="1135.79" y="388.5" width="4.2" height="8.5" fill="#f08c12"/>
<rect x="1135.79" y="376.2" width="4.2" height="12.3" fill="#89d2d5"/>
<rect x="1141.5" y="384" width="4.2" height="13" fill="#f08c12"/>
<rect x="1141.5" y="379.9" width="4.2" height="4.1" fill="#f5bd12"/>
<rect x="1141.5" y="337.9" width="4.2" height="42" fill="#89d2d5"/>
<rect x="1147.21" y="391.3" width="4.2" height="5.7" fill="#f08c12"/>
<rect x="1147.21" y="379" width="4.2" height="12.3" fill="#f5bd12"/>
<rect x="1147.21" y="363.1" width="4.2" height="15.9" fill="#89d2d5"/>
<rect x="1152.93" y="357" width="4.2" height="40" fill="#f08c12"/>
<rect x="1152.93" y="354.3" width="4.2" height="2.7" fill="#f5bd12"/>
<rect x="1152.93" y="292.8" width="4.2" height="61.5" fill="#89d2d5"/>
<rect x="1158.64" y="354.3" width="4.2" height="42.7" fill="#f08c12"/>
<rect x="1158.64" y="350.2" width="4.2" height="4.1" fill="#89d2d5"/>
<rect x="1164.36" y="351.6" width="4.2" height="45.4" fill="#f08c12"/>
<rect x="1164.36" y="318.8" width="4.2" height="32.8" fill="#f5bd12"/>
<rect x="1164.36" y="247.6" width="4.2" height="71.2" fill="#89d2d5"/>
<rect x="1170.07" y="366.6" width="4.2" height="30.4" fill="#f08c12"/>
<rect x="1170.07" y="361.2" width="4.2" height="5.4" fill="#f5bd12"/>
<rect x="1170.07" y="337.4" width="4.2" height="23.8" fill="#89d2d5"/>
<rect x="1175.79" y="363.9" width="4.2" height="33.1" fill="#f08c12"/>
<rect x="1175.79" y="351.6" width="4.2" height="12.3" fill="#f5bd12"/>
<rect x="1175.79" y="233.9" width="4.2" height="117.7" fill="#89d2d5"/>
<rect x="1181.5" y="351.6" width="4.2" height="45.4" fill="#f08c12"/>
<rect x="1181.5" y="341.5" width="4.2" height="10.1" fill="#f5bd12"/>
<rect x="1181.5" y="276.4" width="4.2" height="65.1" fill="#89d2d5"/>
<rect x="1187.21" y="376.2" width="4.2" height="20.8" fill="#f08c12"/>
<rect x="1187.21" y="356.5" width="4.2" height="19.7" fill="#89d2d5"/>
<rect x="1192.93" y="388.5" width="4.2" height="8.5" fill="#f08c12"/>
<rect x="1192.93" y="380.3" width="4.2" height="8.2" fill="#f5bd12"/>
<rect x="1192.93" y="198.4" width="4.2" height="181.9" fill="#89d2d5"/>
<rect x="1198.64" y="396" width="4.2" height="1" fill="#f08c12"/>
<rect x="1198.64" y="394" width="4.2" height="2" fill="#f5bd12"/>
<rect x="1198.64" y="388.5" width="4.2" height="5.5" fill="#89d2d5"/>
</g>
<path d="M86.5,369.4 L114.25,370 L158,371.9 L195.5,373.5 L243,374.4 L300,375.2 L328,376.1 L350.6,377.5 L365.6,379.4 L384.4,382.6 L403,384.5 L412.4,385.75 L421.75,387.3 L431.1,388.75 L440.5,390.2 L449.9,391.4 L459.2,392.5 L468.6,393.4 L478,394.6 L487.3,395.3 L496.7,396.25 L509.3,396.7" fill="none" stroke="#d84a5c" stroke-width="2.6" stroke-linejoin="round" stroke-linecap="round"/>
<path d="M509.3,396.8 L530,396.25 L537.5,391.25 L545,386.9 L555,384 L562.5,381.25 L570,377.5 L577.5,376.25 L587.5,375 L592.5,373.75 L610,372.5 L617.5,370 L625,367.5 L635,364.4 L642.5,362.5 L650,360.8 L665,360.3 L672.5,359.75 L682.5,358.1 L691.25,356.25 L707.5,354.4 L715,352.5 L722.5,350 L730,345.6 L737.5,341.9 L747.5,338.75 L760,336.25 L770,333.75 L777.5,331.9 L792.5,330.6 L800,328.75 L810,326.9 L815,326.3 L823.3,320.5 L831.6,313.9 L839.9,307.2 L848.2,302.3 L856.5,297.3 L864.8,293.1 L876.4,289.8 L886.4,285.7 L898,281.5 L908,277.4 L914.6,271.6 L922.9,268.2 L931.2,264.9 L941.1,263.3 L951.1,260.8 L961,259.1 L971,256.6 L978.8,247.4 L987.6,237.7 L996.4,231.5 L1005.2,226.3 L1012.2,222.7 L1021,214.8 L1029.8,211.3 L1036.8,206.9 L1047.4,203.4 L1057.9,198.1 L1068.5,192.9 L1080.8,187.6 L1087.8,182.3 L1096.6,176.2 L1105.4,171.8 L1115.9,170 L1125.9,169.5 L1131.7,167.3 L1139.5,166.1 L1149.3,163.7 L1155.2,161.4 L1160,160.5 L1165.9,155.9 L1170.8,154.4 L1176.6,150.5 L1183.5,146.1 L1188.4,145.1 L1193.2,139.8 L1200.5,139" fill="none" stroke="#36b08f" stroke-width="2.2" stroke-linejoin="round" stroke-linecap="round"/>
<line x1="509.3" y1="127.5" x2="509.3" y2="397" stroke="#ec3449" stroke-width="2" stroke-dasharray="7.8,3.5"/>
<path d="M509.3,112.8 L514.4,128.2 L509.3,125.5 L504.2,128.2 Z" fill="#f0374b"/>
<text x="509.3" y="105.6" text-anchor="middle" font-size="12" letter-spacing="-0.37" fill="#e8e9ec" stroke="#e8e9ec" stroke-width="0.3">Current Price:101774</text>
<g font-size="11" fill="#aeb1b8" stroke="#aeb1b8" stroke-width="0.3">
<text x="76" y="117.1" text-anchor="end">583.21M</text>
<text x="76" y="157.4" text-anchor="end">500.00M</text>
<text x="76" y="205.4" text-anchor="end">400.00M</text>
<text x="76" y="253.3" text-anchor="end">300.00M</text>
<text x="76" y="303.1" text-anchor="end">200.00M</text>
<text x="76" y="351.1" text-anchor="end">100.00M</text>
<text x="76" y="399.5" text-anchor="end">264.31K</text>
<text x="1211" y="119.7">20.00B</text>
<text x="1211" y="189.6">15.00B</text>
<text x="1211" y="259.4">10.00B</text>
<text x="1211" y="329.8">5.00B</text>
<text x="1211" y="399.5">0</text>
<text x="86.46" y="412.5" text-anchor="middle">87995</text>
<text x="137.89" y="412.5" text-anchor="middle">89588</text>
<text x="189.31" y="412.5" text-anchor="middle">91181</text>
<text x="240.74" y="412.5" text-anchor="middle">92774</text>
<text x="292.17" y="412.5" text-anchor="middle">94898</text>
<text x="343.6" y="412.5" text-anchor="middle">96491</text>
<text x="395.03" y="412.5" text-anchor="middle">98084</text>
<text x="446.46" y="412.5" text-anchor="middle">99677</text>
<text x="497.89" y="412.5" text-anchor="middle">101270</text>
<text x="549.31" y="412.5" text-anchor="middle">102863</text>
<text x="600.74" y="412.5" text-anchor="middle">104456</text>
<text x="652.17" y="412.5" text-anchor="middle">106049</text>
<text x="703.6" y="412.5" text-anchor="middle">107819</text>
<text x="755.03" y="412.5" text-anchor="middle">109412</text>
<text x="806.46" y="412.5" text-anchor="middle">111005</text>
<text x="857.89" y="412.5" text-anchor="middle">112598</text>
<text x="909.31" y="412.5" text-anchor="middle">114191</text>
<text x="960.74" y="412.5" text-anchor="middle">115784</text>
<text x="1012.17" y="412.5" text-anchor="middle">117377</text>
<text x="1063.6" y="412.5" text-anchor="middle">118970</text>
<text x="1115.03" y="412.5" text-anchor="middle">120563</text>
<text x="1166.46" y="412.5" text-anchor="middle">122156</text>
</g>
<g opacity="0.8" fill="#f4f1ea">
<path d="M1096,367.5 C1096,360.5 1117,360.5 1117,367.5 L1114,376 L1112.4,385.5 Q1106.5,387.5 1100.6,385.5 L1099,376 Z"/>
<text x="1122.5" y="379.6" font-size="18" font-weight="bold" textLength="68" lengthAdjust="spacingAndGlyphs">coinglass</text>
</g>
<rect x="84.2" y="415.6" width="1121.4" height="56.3" fill="#131a2c"/>
<rect x="78.6" y="437.4" width="14" height="15.4" rx="4" fill="#373b50"/>
<rect x="83.1" y="441.8" width="1.5" height="6.2" rx="0.5" fill="#a3a6ba"/><rect x="86.4" y="441.8" width="1.5" height="6.2" rx="0.5" fill="#a3a6ba"/>
<rect x="1196.8" y="437.4" width="13.6" height="15.4" rx="4" fill="#373b50"/>
<rect x="1201.3" y="441.8" width="1.5" height="6.2" rx="0.5" fill="#a3a6ba"/><rect x="1204.5" y="441.8" width="1.5" height="6.2" rx="0.5" fill="#a3a6ba"/>
</svg>
</body></html>
